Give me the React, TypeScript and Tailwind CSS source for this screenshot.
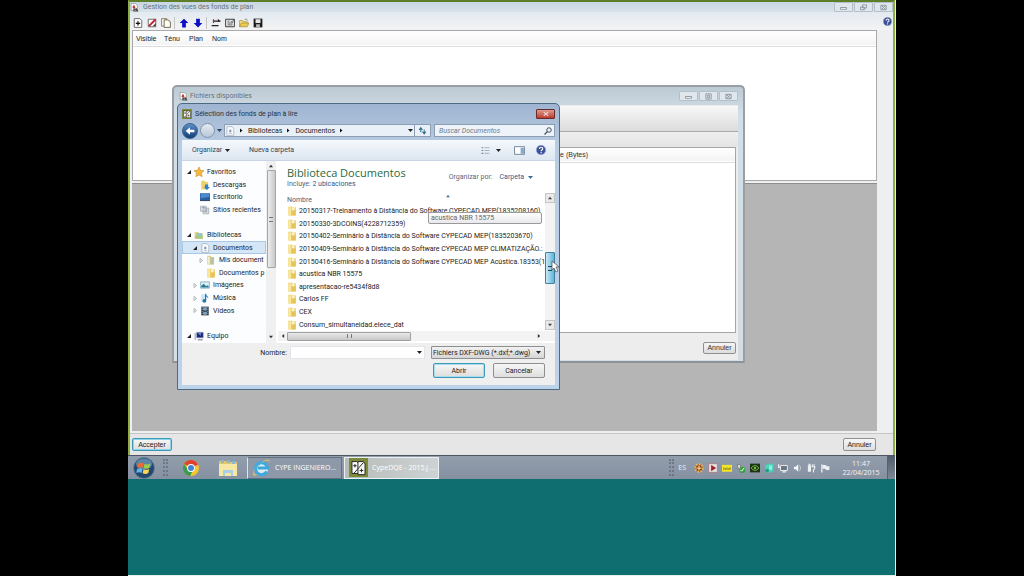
import type { ReactNode } from "react";

const UI = "font-[Roboto,'Open_Sans',sans-serif]";
const TITLE = "font-['Open_Sans','Noto_Sans',sans-serif]";
const CLASSIC = "font-['Liberation_Sans',Arial,sans-serif]";

function Svg({ className, box = "0 0 16 16", children }: { className: string; box?: string; children: ReactNode }) {
  return (
    <svg className={`shrink-0 ${className}`} viewBox={box} fill="none" aria-hidden="true">
      {children}
    </svg>
  );
}

function Caret({ className = "size-[5px] text-[#222]" }: { className?: string }) {
  return (
    <Svg className={className} box="0 0 10 10">
      <path d="M0 2h10L5 8z" fill="currentColor" />
    </Svg>
  );
}

function Crumb() {
  return (
    <Svg className="size-[5px]" box="0 0 10 10">
      <path d="M2 1v8l5-4z" fill="#111" />
    </Svg>
  );
}

function AppIcon() {
  return (
    <Svg className="size-[9px]">
      <path d="M2 1h8l3 3v9H2z" fill="#fff" stroke="#777" />
      <path d="M4 8l3-5 2 3 1 5z" fill="#c33b35" />
      <path d="M6 15V9l3 2 3-2 3 6z" fill="#444" />
      <path d="M8 13h3" stroke="#fff" />
    </Svg>
  );
}

function PlanIcon({ className = "size-[10px]" }: { className?: string }) {
  return (
    <Svg className={className}>
      <path d="M0 0h16v16H0z" fill="#7d8a3c" />
      <path d="M2.500 3h4l2 2v8h-6z" fill="#fff" stroke="#222" strokeWidth=".8" />
      <path d="M7.500 3h4.500l1.500 2v9h-6z" fill="#f6f6ee" stroke="#222" strokeWidth=".8" />
      <path d="M4 13l8-9M5 5v3M10.500 9v3M3.500 6.500h3M9 10.500h3" stroke="#222" strokeWidth=".8" />
    </Svg>
  );
}

function FolderIcon() {
  return (
    <Svg className="size-[10px]">
      <path d="M2 1h7l1 1h4v13H2z" fill="#eccb61" />
      <path d="M2 2h5v13H2z" fill="#f8e79f" />
      <path d="M7 6h7v9H7z" fill="#e6c458" />
      <path d="M8 2h4v5H8z" fill="#fbf3cf" />
    </Svg>
  );
}

function StarIcon() {
  return (
    <Svg className="size-[10px]">
      <path d="M8 0l2.400 5.200 5.600.7-4.200 3.900 1.200 5.700L8 12.700l-5 2.800 1.200-5.700L0 5.900l5.600-.7z" fill="#f5b942" stroke="#d08a2c" />
    </Svg>
  );
}

function DownloadIcon() {
  return (
    <Svg className="size-[10px]">
      <path d="M2 1h6l1 2h4v12H2z" fill="#efd06b" />
      <path d="M8 7h5v4h3l-5 5-5-5h2z" fill="#2f7fd0" />
    </Svg>
  );
}

function DesktopIcon() {
  return (
    <Svg className="size-[10px]">
      <path d="M0 2h16v11H0z" fill="#2a5f9f" />
      <path d="M1 3h14v5L1 10z" fill="#4b8bd0" />
      <path d="M0 13h16v1.500H0z" fill="#1b335e" />
    </Svg>
  );
}

function RecentIcon() {
  return (
    <Svg className="size-[10px]">
      <path d="M1 2h9v8H1zM5 5h9v9H5z" fill="#e5e8ec" stroke="#8792a0" />
      <path d="M7 8h5M7 11h5M3 4h5" stroke="#7b8696" />
    </Svg>
  );
}

function LibraryIcon() {
  return (
    <Svg className="size-[10px]">
      <path d="M1 3h6l1 2h6v9H1z" fill="#ecd27a" />
      <path d="M4 5h9v7H4z" fill="#8fc9d6" />
      <path d="M2 9h12v5H2z" fill="#a7c983" />
    </Svg>
  );
}

function DocIcon() {
  return (
    <Svg className="size-[10px]">
      <path d="M3 1h8l3 3v11H3z" fill="#f7f9fb" stroke="#97a2ae" />
      <path d="M6 12h5" stroke="#a5afbb" />
      <path d="M7 6h3v4H7z" fill="#7690b4" />
    </Svg>
  );
}

function MyDocsIcon() {
  return (
    <Svg className="size-[10px]">
      <path d="M2 1h6l1 2h4v12H2z" fill="#d8cf97" />
      <path d="M7 4h5v11H7z" fill="#b9c1a6" />
      <path d="M3 3h3v11H3z" fill="#f3eec9" />
    </Svg>
  );
}

function ImagesIcon() {
  return (
    <Svg className="size-[10px]">
      <path d="M1 3h14v10H1z" fill="#dff0f7" stroke="#5793ab" />
      <path d="M2 12V9l4-3 4 4 3-2 1 4z" fill="#2b7c93" />
    </Svg>
  );
}

function MusicIcon() {
  return (
    <Svg className="size-[10px]">
      <path d="M2 2h7v12H2z" fill="#cfe4f2" />
      <path d="M9 1v11" stroke="#1f78b4" strokeWidth="2" />
      <path d="M9 1c1 4 5 3 4 8-1-3-3-3-4-3z" fill="#2793cf" />
      <circle cx="7" cy="12.500" r="3" fill="#1f78b4" />
    </Svg>
  );
}

function VideoIcon() {
  return (
    <Svg className="size-[10px]">
      <path d="M2 1h12v14H2z" fill="#2f3c4a" />
      <path d="M5 2h6v5H5zM5 9h6v5H5z" fill="#7fa3bd" />
      <path d="M3.500 2v12M12.500 2v12" stroke="#c8d0d6" strokeDasharray="1.500 1.500" />
    </Svg>
  );
}

function ComputerIcon() {
  return (
    <Svg className="size-[10px]">
      <path d="M1 3h2v11H1z" fill="#a8adb5" />
      <path d="M4 2h11v9H4z" fill="#1b2a7a" stroke="#b9c0cc" />
      <path d="M6 3h5v5z" fill="#6f87d8" />
      <path d="M6 13h8v2H6z" fill="#8f96a3" />
    </Svg>
  );
}

function HelpIcon({ className }: { className: string }) {
  return (
    <Svg className={className}>
      <circle cx="8" cy="8" r="7.500" fill="#3a5197" stroke="#97a7d2" />
      <path d="M5.500 6.500c0-4 5.500-3.500 5.200-.3C10.500 8 8.200 8 8.200 10" stroke="#fff" strokeWidth="1.800" />
      <circle cx="8.200" cy="12.400" r="1.100" fill="#fff" />
    </Svg>
  );
}

function WindowButtons({ restore = false }: { restore?: boolean }) {
  const cls = "flex h-[10px] w-[19px] items-center justify-center rounded-[1px] border border-[#b3bfca] bg-[#dfe6ec]";
  return (
    <div className="flex gap-px">
      <button className={cls} aria-label="Réduire">
        <Svg className="size-[7px]"><path d="M1 8h14v4H1z" fill="#fff" stroke="#868f98" strokeWidth="2" /></Svg>
      </button>
      <button className={cls} aria-label="Agrandir">
        <Svg className="size-[7px]">
          {restore ? (
            <path d="M6 2h9v7H6zM1 7h9v6H1z" fill="#eee" stroke="#868f98" strokeWidth="2" />
          ) : (
            <path d="M2 2h12v12H2zM6 5v6h4V5z" fill="#eee" stroke="#868f98" strokeWidth="2" />
          )}
        </Svg>
      </button>
      <button className={cls} aria-label="Fermer">
        <Svg className="size-[7px]"><path d="M2 3h12v10H2zM4 4l8 8M12 4l-8 8" stroke="#868f98" strokeWidth="2" /></Svg>
      </button>
    </div>
  );
}

const tools: { name: string; art: ReactNode; divider?: boolean }[] = [
  { name: "Ajouter", art: <><path d="M2 1h9l3 3v11H2z" fill="#fff" stroke="#666" strokeWidth="1.500" /><path d="M8 5v7M4.500 8.500h7" stroke="#111" strokeWidth="2" /></> },
  { name: "Modifier", art: <><path d="M2 2h12v12H2z" fill="#fff" stroke="#666" strokeWidth="1.500" /><path d="M3 13L14 2" stroke="#c02035" strokeWidth="3" /><path d="M9 13h5V8z" fill="#444" /></> },
  { name: "Copier", art: <><path d="M1 1h8v12H1z" fill="#fff" stroke="#8c7c50" strokeWidth="1.500" /><path d="M5 3h6l4 3v9H5z" fill="#fffef5" stroke="#6b654f" strokeWidth="1.500" /></>, divider: true },
  { name: "Monter", art: <path d="M8 1l7 7h-4v7H5V8H1z" fill="#0c10c4" /> },
  { name: "Descendre", art: <path d="M8 15L1 8h4V1h6v7h4z" fill="#0c10c4" />, divider: true },
  { name: "Déplacer", art: <><path d="M4 5h11M1 12h11" stroke="#222" strokeWidth="2" /><path d="M4 2v6" stroke="#b02a2a" strokeWidth="2" /><path d="M11 1l4 4-4 1z" fill="#222" /></> },
  { name: "Calques", art: <><path d="M1 2h14v12H1z" fill="#eee" stroke="#333" strokeWidth="1.500" /><path d="M4 5h3M4 8h8M4 11h8M9 5l3 2 2-5" stroke="#444" strokeWidth="1.300" /></> },
  { name: "Ouvrir", art: <><path d="M1 14V4h5l1 2h6v3" fill="#f4e08d" stroke="#9b8126" /><path d="M1 14l3-6h12l-3 6z" fill="#eccb4e" stroke="#9b8126" /><path d="M9 3c2-2 4-1 5 1" stroke="#444" /></> },
  { name: "Enregistrer", art: <><path d="M1 1h14v14H1z" fill="#1d1d1d" /><path d="M4 2h8v6H4z" fill="#e8e8e8" /><path d="M5 10h6v5H5z" fill="#bbb" /></> },
];

type Node = { label: string; icon: ReactNode; pad: string; mark?: "open" | "closed"; active?: boolean };
const tree: (Node | null)[] = [
  { label: "Favoritos", icon: <StarIcon />, pad: "pl-[4px]", mark: "open" },
  { label: "Descargas", icon: <DownloadIcon />, pad: "pl-[10px]" },
  { label: "Escritorio", icon: <DesktopIcon />, pad: "pl-[10px]" },
  { label: "Sitios recientes", icon: <RecentIcon />, pad: "pl-[10px]" },
  null,
  { label: "Bibliotecas", icon: <LibraryIcon />, pad: "pl-[4px]", mark: "open" },
  { label: "Documentos", icon: <DocIcon />, pad: "pl-[10px]", mark: "open", active: true },
  { label: "Mis document", icon: <MyDocsIcon />, pad: "pl-[16px]", mark: "closed" },
  { label: "Documentos p", icon: <FolderIcon />, pad: "pl-[16px]" },
  { label: "Imágenes", icon: <ImagesIcon />, pad: "pl-[10px]", mark: "closed" },
  { label: "Música", icon: <MusicIcon />, pad: "pl-[10px]", mark: "closed" },
  { label: "Vídeos", icon: <VideoIcon />, pad: "pl-[10px]", mark: "closed" },
  null,
  { label: "Equipo", icon: <ComputerIcon />, pad: "pl-[4px]", mark: "open" },
];

const files = [
  "20150317-Treinamento à Distância do Software CYPECAD MEP(1835208160)",
  "20150330-3DCOINS(4228712359)",
  "20150402-Seminário à Distância do Software CYPECAD MEP(1835203670)",
  "20150409-Seminário à Distância do Software CYPECAD MEP CLIMATIZAÇÃO.:",
  "20150416-Seminário à Distância do Software CYPECAD MEP Acústica.18353(18",
  "acustica NBR 15575",
  "apresentacao-re5434f8d8",
  "Carlos FF",
  "CEX",
  "Consum_simultaneidad.elece_dat",
];

function TreeRow({ node }: { node: Node | null }) {
  if (!node) return <li className="flex-1" />;
  return (
    <li className="min-h-0 flex-1">
      <button
        className={`flex h-full w-full items-center gap-[3px] overflow-hidden whitespace-nowrap border text-left ${node.pad} ${
          node.active ? "border-[#a9c8e6] bg-[#d5e6f7]" : "border-transparent"
        }`}
      >
        <span className="flex w-[4px] shrink-0">
          {node.mark === "open" && <Svg className="size-[4px]" box="0 0 10 10"><path d="M10 0v10H0z" fill="#222" /></Svg>}
          {node.mark === "closed" && <Svg className="size-[5px]" box="0 0 10 10"><path d="M2 1v8l5-4z" stroke="#999" strokeWidth="1.500" /></Svg>}
        </span>
        {node.icon}
        <span>{node.label}</span>
      </button>
    </li>
  );
}

function FileDialog() {
  const push = "h-[15px] w-[52px] rounded-[2px] border bg-gradient-to-b from-[#f6f6f6] to-[#dedede]";
  return (
    <section
      aria-label="Sélection des fonds de plan à lire"
      className={`absolute left-[49px] top-[103px] flex w-[383px] flex-col rounded-t-[5px] border border-[#4a6a85] bg-gradient-to-b from-[#9fb4d0] via-[#b9cde3] via-15% to-[#bcd3ea] px-[4px] pb-[4px] text-[7px] leading-[10px] text-[#1c1c1c] ${UI}`}
    >
      <header className="flex h-[19px] items-center gap-[3px]">
        <PlanIcon className="size-[10px]" />
        <h2 className="flex-1 text-[#26323f]">Sélection des fonds de plan à lire</h2>
        <button aria-label="Cerrar" className="flex h-[10px] w-[19px] items-center justify-center rounded-[1px] border border-[#6b2a28] bg-gradient-to-b from-[#dd9a90] to-[#b9392c]">
          <Svg className="size-[6px]"><path d="M2 3l12 10M14 3L2 13" stroke="#f3dada" strokeWidth="3" /></Svg>
        </button>
      </header>

      <div className="flex h-[17px] items-center gap-[2px] pb-[2px]">
        <button aria-label="Atrás" className="flex size-[16px] items-center justify-center rounded-full border border-[#3d5f88] bg-gradient-to-b from-[#5d8fc7] to-[#143d7a]">
          <Svg className="size-[10px]"><path d="M1 8l7-6v4h7v4H8v4z" fill="#fff" /></Svg>
        </button>
        <button aria-label="Adelante" className="size-[15px] rounded-full border border-[#8295ab] bg-gradient-to-b from-[#e4ebf3] to-[#b8c7d8]" />
        <Caret className="size-[5px] text-[#2a466b]" />
        <nav aria-label="Ruta" className="flex h-[13px] w-[191px] items-center gap-[4px] border border-[#8b9eb4] bg-[#e9f0f8] pr-px">
          <DocIcon />
          <Crumb />
          <a href="#bibliotecas">Bibliotecas</a>
          <Crumb />
          <a href="#documentos">Documentos</a>
          <Crumb />
          <span className="flex-1" />
          <Caret />
        </nav>
        <button aria-label="Actualizar" className="-ml-[3px] mr-px flex h-[13px] w-[17px] items-center justify-center border border-[#8b9eb4] bg-[#e9f0f8]">
          <Svg className="size-[9px]"><path d="M5 11V4M2 7l3-4 3 4M11 6v7M8 10l3 4 3-4" stroke="#2e6c86" strokeWidth="1.800" /></Svg>
        </button>
        <label className="flex h-[13px] min-w-0 flex-1 items-center border border-[#8b9eb4] bg-[#eef3f9] pl-[4px] pr-[2px]">
          <input aria-label="Buscar" placeholder="Buscar Documentos" className="min-w-0 flex-1 bg-transparent italic outline-none placeholder:text-[#6f7a86]" />
          <Svg className="size-[8px]"><circle cx="10" cy="6" r="4.500" stroke="#456" strokeWidth="2" /><path d="M7 9l-6 6" stroke="#456" strokeWidth="2.500" /></Svg>
        </label>
      </div>

      <div className="flex h-[21px] items-center border-b border-[#c9d5e4] bg-gradient-to-b from-[#f5f8fc] to-[#dde6f2] pl-[10px] pr-[9px] text-[#2f3f55]">
        <button className="flex items-center gap-[3px]">Organizar <Caret /></button>
        <button className="ml-[19px]">Nueva carpeta</button>
        <span className="flex-1" />
        <button aria-label="Vista" className="flex items-center gap-[6px]">
          <Svg className="size-[9px]"><path d="M1 3h3M1 8h3M1 13h3" stroke="#6f8195" strokeWidth="2" /><path d="M6 3h9M6 8h9M6 13h9" stroke="#9aa6b3" strokeWidth="1.500" /></Svg>
          <Caret />
        </button>
        <button aria-label="Panel de vista previa" className="ml-[13px]">
          <Svg className="h-[9px] w-[11px]" box="0 0 20 16"><path d="M1 1h18v14H1z" fill="#fff" stroke="#61758d" strokeWidth="1.500" /><path d="M12 3h6v11h-6z" fill="#86a9c8" /></Svg>
        </button>
        <button aria-label="Ayuda" className="ml-[11px]"><HelpIcon className="size-[10px]" /></button>
      </div>

      <div className="flex h-[182px] bg-white">
        <nav aria-label="Carpetas" className="min-w-0 basis-[84px] bg-[#fcfdfe] pt-[5px]">
          <ul className="flex h-[176px] flex-col">
            {tree.map((node, i) => <TreeRow key={i} node={node} />)}
          </ul>
        </nav>
        <div className="flex w-[10px] shrink-0 flex-col items-center bg-[#f0f0f1]">
          <span className="flex h-[9px] items-center"><Caret className="size-[4px] rotate-180 text-[#333]" /></span>
          <span className="flex h-[98px] w-[9px] items-center justify-center rounded-[1px] border border-[#a5a5a5] bg-gradient-to-r from-[#ededed] to-[#c9c9c9]">
            <span className="h-[5px] w-[4px] border-y border-[#777]" />
          </span>
          <span className="flex-1" />
          <span className="flex h-[12px] items-center"><Caret className="size-[4px] text-[#333]" /></span>
        </div>
        <div className="flex min-w-0 flex-1 flex-col pl-[2px]">
          <div className="flex h-[32px] items-center justify-between pl-[9px] pr-[22px]">
            <div>
              <h3 className={`text-[11px] leading-[13px] text-[#2c6a3c] ${TITLE}`}>Biblioteca Documentos</h3>
              <p className="text-[#5c6874]">Incluye: <a href="#ubicaciones" className="text-[#2c5c8f]">2 ubicaciones</a></p>
            </div>
            <div className="flex items-center gap-[7px] text-[#5c6874]">
              Organizar por:
              <button className="flex items-center gap-[4px] text-[#2c5c8f]">Carpeta <Caret className="size-[5px] text-[#3a6b93]" /></button>
            </div>
          </div>
          <div className="flex min-h-0 flex-1">
            <div className="flex min-w-0 flex-1 flex-col pl-[9px]">
              <div className="flex h-[12px] shrink-0 items-end text-[#4c607a]">
                <span className="flex-1">Nombre</span>
                <Caret className="mb-[7px] mr-[95px] size-[4px] rotate-180 text-[#55779a]" />
              </div>
              <ul className="flex h-[126px] shrink-0 flex-col">
                {files.map((f) => (
                  <li key={f} className="min-h-0 flex-1">
                    <button className="flex h-full w-full items-center gap-[2px] overflow-hidden whitespace-nowrap text-left">
                      <FolderIcon />
                      <span>{f}</span>
                    </button>
                  </li>
                ))}
              </ul>
            </div>
            <div className="flex h-[137px] w-[10px] shrink-0 flex-col items-center bg-[#f3f3f3]">
              <span className="flex h-[10px] w-full items-center justify-center border border-[#c5c5c5] bg-[#e9e9e9]"><Caret className="size-[4px] rotate-180 text-[#444]" /></span>
              <span className="h-[49px]" />
              <span className="flex h-[32px] w-full items-center justify-center rounded-[1px] border border-[#3f7f9f] bg-gradient-to-r from-[#c6e8f6] to-[#5fb4d9]">
                <span className="h-[5px] w-[4px] border-y border-[#245]" />
              </span>
              <span className="flex-1" />
              <span className="flex h-[10px] w-full items-center justify-center border border-[#c5c5c5] bg-[#e9e9e9]"><Caret className="size-[4px] text-[#444]" /></span>
            </div>
          </div>
          <div className="mb-[2px] flex h-[10px] shrink-0 items-center bg-[#f3f3f3]">
            <span className="flex w-[9px] justify-center"><Caret className="size-[4px] rotate-90 text-[#333]" /></span>
            <span className="flex h-[9px] w-[124px] items-center justify-center rounded-[1px] border border-[#a0a0a0] bg-gradient-to-b from-[#e8e8e8] to-[#c8c8c8]">
              <span className="h-[4px] w-[5px] border-x border-[#777]" />
            </span>
            <span className="flex-1" />
            <Caret className="mr-[14px] size-[4px] -rotate-90 text-[#333]" />
          </div>
        </div>
      </div>

      <footer className="flex flex-col gap-[4px] bg-[#efefef] pb-[7px] pr-[10px] pt-[3px]">
        <div className="flex items-center">
          <label htmlFor="nombre" className="w-[108px] pr-[3px] text-right">Nombre:</label>
          <div className="flex h-[13px] min-w-0 flex-1 items-center border border-[#e2e6ea] bg-white pr-[2px]">
            <input id="nombre" className="min-w-0 flex-1 bg-transparent px-[2px] outline-none" />
            <Caret />
          </div>
          <div className="ml-[6px] flex h-[13px] w-[114px] items-center rounded-[1px] border border-[#8f8f8f] bg-gradient-to-b from-[#f2f2f2] to-[#d6d6d6] pr-[3px]">
            <select aria-label="Tipo de archivo" className="h-full min-w-0 flex-1 appearance-none bg-transparent pl-px outline-none">
              <option>Fichiers DXF-DWG (*.dxf;*.dwg)</option>
            </select>
            <Caret />
          </div>
        </div>
        <div className="flex justify-end gap-[8px]">
          <button className={`${push} border-[#3c9ab8] ring-1 ring-inset ring-[#a9dcec]`}>Abrir</button>
          <button className={`${push} border-[#8f8f8f]`}>Cancelar</button>
        </div>
      </footer>

      <div role="tooltip" className="absolute left-[250px] top-[108px] w-[114px] rounded-[2px] border border-[#9a9a9a] bg-gradient-to-b from-white to-[#e8e8ee] px-[2px] text-[#666]">
        acustica NBR 15575
      </div>
      <Svg className="absolute left-[373px] top-[156px] h-[13px] w-[9px]" box="0 0 9 13">
        <path d="M1 1v9l2-2 2 4 2-1-2-4h3z" fill="#fff" stroke="#555" strokeWidth=".8" />
      </Svg>
    </section>
  );
}

function AvailableFiles() {
  return (
    <section
      aria-label="Fichiers disponibles"
      className="absolute left-[44px] top-[85px] flex w-[573px] flex-col rounded-t-[5px] border-2 border-[#9b9fa3] border-b-[#8d9296] bg-gradient-to-b from-[#bccad4] via-[#d3dee6] via-10% to-[#d5dde4] px-[5px] pb-px text-[7px] leading-[10px] text-[#333]"
    >
      <header className={`flex h-[18px] items-center gap-[2px] text-[#66727d] ${UI}`}>
        <AppIcon />
        <h2 className="flex-1">Fichiers disponibles</h2>
        <WindowButtons />
      </header>
      <div className={`bg-[#ededed] pt-px ${CLASSIC}`}>
        <div className="h-[26px] border-b border-[#aaa] bg-gradient-to-b from-[#f8f8f8] to-[#dcdcdc]" />
        <div className="h-[15px] bg-gradient-to-b from-[#eee] to-[#e4e4e4]" />
        <div className="mr-[2px] h-[186px] border border-[#a5a5a5] bg-white">
          <table className="w-full">
            <thead>
              <tr className="h-[14px] border-b border-[#ddd] bg-gradient-to-b from-white to-[#f3f3f3]">
                <th className="pl-[368px] text-left font-normal">Taille (Bytes)</th>
              </tr>
            </thead>
          </table>
        </div>
        <div className="flex h-[27px] items-center justify-end pr-[2px] pt-[3px]">
          <button className="h-[12px] w-[33px] rounded-[2px] border border-[#8f8f8f] bg-gradient-to-b from-[#f5f5f5] to-[#dcdcdc]">Annuler</button>
        </div>
      </div>
    </section>
  );
}

const tray: { name: string; art: ReactNode }[] = [
  { name: "Actualizaciones", art: <><circle cx="8" cy="8" r="6" fill="#8a3d12" stroke="#e6b35c" strokeWidth="3" strokeDasharray="3 1.500" /><path d="M4 8h8M8 4v8" stroke="#f3ce8a" strokeWidth="2" /></> },
  { name: "Reproductor", art: <><path d="M1 1h14v14H1z" fill="#e8dede" stroke="#a66" /><path d="M5 3v10l8-5z" fill="#9c1f2c" /></> },
  { name: "Notas", art: <><path d="M0 3h16v11H0z" fill="#f4e627" /><path d="M3 7v4M6 8v3M8 7v4M11 8v3M13 7v4" stroke="#7a7420" strokeWidth="1.500" /></> },
  { name: "Dispositivo", art: <><path d="M2 2l5 1 1 7H4z" fill="#ddd" stroke="#666" /><circle cx="10" cy="11" r="5" fill="#3aa044" /><path d="M7 11l2 2 4-5" stroke="#fff" strokeWidth="1.500" /></> },
  { name: "Gráficos", art: <><path d="M0 1h16v14H0z" fill="#1d3418" /><path d="M2 8c3-5 9-5 12 0-3 5-9 5-12 0z" stroke="#73b83a" strokeWidth="1.500" /><circle cx="8" cy="8" r="2" fill="#73b83a" /></> },
  { name: "Mensajes", art: <><path d="M2 4l5-3h8v12l-5 2H2z" fill="#48d5b9" /><path d="M8 4h5v7H8z" fill="#8cf0dc" /><circle cx="5" cy="12" r="3" fill="#279c86" /></> },
  { name: "Red", art: <><path d="M4 4h11v8H4z" fill="#697785" stroke="#eee" strokeWidth="1.500" /><path d="M1 2v5h3M7 14h6" stroke="#eee" strokeWidth="2" /></> },
  { name: "Volumen", art: <><path d="M3 6h3l4-4v12l-4-4H3z" fill="#f4f6f8" /><path d="M12 4c2 2 2 6 0 8" stroke="#cfd6dd" strokeWidth="1.500" /></> },
  { name: "Energía", art: <><path d="M3 4h5v10H3zM4 1h3v3H4z" fill="#edf0f3" /><path d="M10 2v4M13 2v4M9 6h5v3l-2 2v4" stroke="#edf0f3" strokeWidth="1.800" /></> },
  { name: "Centro de actividades", art: <><path d="M3 2v13" stroke="#eef1f4" strokeWidth="2" /><path d="M4 3h6v2h5v6H9V9H4z" fill="#eef1f4" /></> },
];

function Grip() {
  return <span className="h-[17px] w-[5px] border-x-2 border-dotted border-[#6b7786]" />;
}

function Taskbar() {
  const task = "flex h-[22px] w-[95px] items-center gap-[4px] overflow-hidden whitespace-nowrap border pl-[4px] text-left text-white";
  return (
    <footer className={`flex h-[24px] items-center border-t border-[#4d5661] bg-gradient-to-b from-[#939eac] to-[#8591a1] text-[7px] leading-[9px] ${TITLE}`}>
      <button aria-label="Inicio" className="ml-[5px]">
        <Svg className="size-[22px]" box="0 0 22 22">
          <circle cx="11" cy="11" r="10.500" fill="#24486b" stroke="#65819b" />
          <ellipse cx="11" cy="7" rx="8" ry="5.500" fill="#7ba5c4" opacity=".65" />
          <path d="M5 7c2-1.500 4-1.500 5.500-.5l-.8 4.300C8 9.800 6.200 10 4.300 11z" fill="#ed6938" />
          <path d="M11.500 6.800c2 1 4 .8 5.800-.4l-.9 4.400c-1.900 1-3.800 1.100-5.600.2z" fill="#99cf45" />
          <path d="M4 12c2-1.100 3.800-1 5.500 0l-.9 4c-1.700-1-3.500-.9-5.300 0z" fill="#64b4ec" />
          <path d="M10.500 12.300c1.800.9 3.800.7 5.700-.3l-.9 4.100c-1.900 1.100-3.700 1.100-5.600.2z" fill="#fcd453" />
        </Svg>
      </button>
      <span className="ml-[8px] flex"><Grip /></span>
      <button aria-label="Chrome" className="ml-[14px]">
        <Svg className="size-[18px]" box="0 0 18 18">
          <circle cx="9" cy="9" r="8" fill="#f4c62f" />
          <path d="M9 9L2 5a8 8 0 0 1 14.200.500z" fill="#dd4132" />
          <path d="M2 5a8 8 0 0 0 6.200 12L11 11 7 12z" fill="#3a9b50" />
          <circle cx="9" cy="9" r="4" fill="#fff" />
          <circle cx="9" cy="9" r="3" fill="#4484d4" />
        </Svg>
      </button>
      <button aria-label="Explorador" className="ml-[18px]">
        <Svg className="size-[20px]" box="0 0 20 20">
          <path d="M1 3h7l1 1h10v13H1z" fill="#e4c767" />
          <path d="M3 2h3v3H3zM9 2h3v3H9zM14 3h3v3h-3z" fill="#87b7d4" />
          <path d="M1 6h18v12H1z" fill="#f6e7a4" />
          <path d="M5 12h10v6H5z" fill="#a9cfe5" />
          <path d="M7 15h6v3H7z" fill="#f6e7a4" />
        </Svg>
      </button>
      <button className={`${task} ml-[9px] border-[#657180] border-l-[#dfe4e9] bg-[#8d99a8]`}>
        <Svg className="size-[19px]" box="0 0 20 20">
          <circle cx="10" cy="11" r="7" fill="#dcecf5" />
          <path d="M15.600 14.200A6.300 6.300 0 1 1 16.300 10.500H6" stroke="#3fa9de" strokeWidth="3.200" />
          <path d="M2.500 16.500C0 13 9 3 16.500 2.500c2.500 0 1.500 3 .5 4.500 3.500-5.500 0-6.500-5-3.500C6 7 0 14 1.500 17.500c1 1.500 3 1 5-.5-2 .8-3.300.8-4-.5z" fill="#efd35b" />
        </Svg>
        CYPE INGENIERO...
      </button>
      <button className={`${task} ml-[2px] border-[#edf0f2] bg-gradient-to-r from-[#b7bdb8] to-[#cdd2d5]`}>
        <PlanIcon className="size-[19px]" />
        CypeDQE - 2015.j ...
      </button>
      <span className="flex-1" />
      <Grip />
      <span className="ml-[4px] mr-[8px] text-[#eef1f4]">ES</span>
      <div className="flex gap-[4px]">
        {tray.map((t) => (
          <button key={t.name} aria-label={t.name} className="flex"><Svg className="size-[10px]">{t.art}</Svg></button>
        ))}
      </div>
      <time className="ml-[11px] w-[40px] text-center text-[#f3f5f7]">11:47<br />22/04/2015</time>
      <button aria-label="Mostrar escritorio" className="ml-[6px] h-[23px] w-[8px] border-l border-[#56616e] bg-gradient-to-b from-[#525d69] to-[#7d8997]" />
    </footer>
  );
}

function MainWindow() {
  const push = "h-[13px] rounded-[2px] border bg-gradient-to-b from-[#f7f7f7] to-[#dedede]";
  return (
    <section aria-label="Gestion des vues des fonds de plan" className={`flex flex-col border-l-2 border-r-2 border-t-2 border-[#8fae45] border-t-[#5d7d28] bg-[#eeeff0] text-[7px] leading-[9px] text-[#222] ${CLASSIC}`}>
      <header className={`flex h-[10px] items-center gap-[4px] bg-gradient-to-b from-[#c9d7e2] to-[#d8e2ea] text-[#65717b] ${UI}`}>
        <AppIcon />
        <h1 className="flex-1">Gestion des vues des fonds de plan</h1>
        <WindowButtons restore />
      </header>
      <div className="flex h-[18px] bg-gradient-to-b from-[#e3eaf0] to-[#f3f3f4] pl-px">
        <div className="flex flex-1 items-center pt-[4px]">
          {tools.map((t) => (
            <div key={t.name} className="flex items-center">
              <button aria-label={t.name} className="flex w-[14px] justify-center"><Svg className="size-[10px]">{t.art}</Svg></button>
              {t.divider && <span className="ml-px mr-[2px] h-[12px] w-px bg-[#c4c4c4]" />}
            </div>
          ))}
        </div>
        <button aria-label="Aide" className="mr-px self-center"><HelpIcon className="size-[9px]" /></button>
      </div>
      <div className="ml-[2px] mr-[16px] h-[151px] border border-[#a9a9a9] bg-white">
        <table className="w-full">
          <thead>
            <tr className="h-[15px] border-b border-[#dcdcdc] bg-gradient-to-b from-white to-[#f4f4f4] text-left">
              <th className="w-[31px] pl-[3px] font-normal">Visible</th>
              <th className="w-[25px] font-normal">Ténu</th>
              <th className="w-[23px] font-normal">Plan</th>
              <th className="font-normal">Nom</th>
            </tr>
          </thead>
        </table>
      </div>
      <div className="ml-[2px] mr-[16px] mt-[2px] h-[248px] border-t border-[#8e8e8e] bg-[#b5b5b5]" />
      <div className="mt-[2px] flex h-[22px] items-center justify-between border-t border-[#c6c6c6] bg-[#e6e6e6] pl-[2px] pr-[17px]">
        <button className={`${push} w-[40px] border-[#3c9ab8] ring-1 ring-inset ring-[#8fd3ea]`}>Accepter</button>
        <button className={`${push} w-[33px] border-[#8f8f8f]`}>Annuler</button>
      </div>
    </section>
  );
}

export default function App() {
  return (
    <div className="flex min-h-screen justify-center bg-black">
      <main className="relative flex w-3/4 flex-col border-b border-r border-[#e6eeee] bg-[#0f6e70]">
        <MainWindow />
        <Taskbar />
        <AvailableFiles />
        <FileDialog />
      </main>
    </div>
  );
}
